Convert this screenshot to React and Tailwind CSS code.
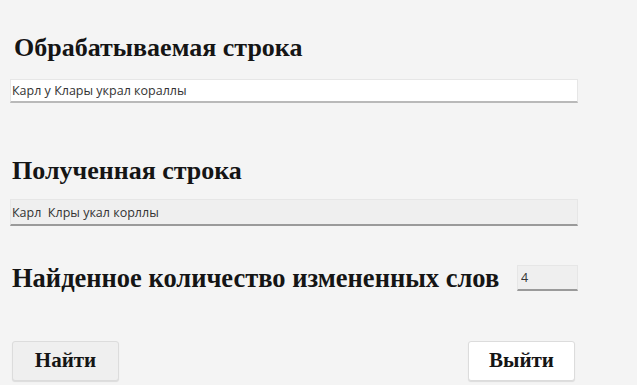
import React, { useState } from "react";

const serif = { fontFamily: '"Liberation Serif", "DejaVu Serif", serif' };

export default function App() {
  const [source, setSource] = useState("Карл у Клары украл кораллы");
  const [result] = useState("Карл  Клры укал корллы");
  const [count] = useState("4");

  return (
    <div className="w-[637px] h-[385px] bg-[#f4f4f4] overflow-hidden font-['Open_Sans',sans-serif]">
      <div className="pl-[10px] pr-[59px] pt-[34px]">
        {/* исходная строка */}
        <h2 className="ml-[4px] text-[26px] leading-[28px] font-bold text-[#151515]" style={serif}>
          Обрабатываемая строка
        </h2>
        <input
          value={source}
          onChange={(e) => setSource(e.target.value)}
          className="mt-[17px] block w-full h-[24px] px-[1px] bg-white text-[12.5px] text-[#333] border border-[#e6e6e6] border-b-2 border-b-[#b9b9b9] outline-none"
        />

        {/* результат */}
        <h2 className="mt-[54px] ml-[2px] text-[26px] leading-[28px] font-bold text-[#151515]" style={serif}>
          Полученная строка
        </h2>
        <input
          value={result}
          readOnly
          className="mt-[14px] block w-full h-[27px] px-[1px] bg-[#efefef] text-[12.5px] text-[#333] border border-[#e6e6e6] border-b-2 border-b-[#9a9a9a] outline-none"
        />

        {/* количество */}
        <div className="mt-[38px] flex items-center">
          <h2 className="ml-[2px] text-[26.5px] leading-[28px] font-bold text-[#151515]" style={serif}>
            Найденное количество измененных слов
          </h2>
          <input
            value={count}
            readOnly
            className="ml-auto block w-[61px] h-[26px] px-[3px] bg-[#efefef] text-[12.5px] text-[#333] border border-[#e6e6e6] border-b-2 border-b-[#9a9a9a] outline-none"
          />
        </div>

        {/* кнопки */}
        <div className="mt-[49px] flex justify-between pl-[2px] pr-[3px]">
          <button
            className="w-[107px] h-[40px] bg-[#efefef] border border-[#dcdcdc] rounded-[3px] shadow-[0_1px_1px_rgba(0,0,0,0.1)] text-[21px] font-bold text-[#151515]"
            style={serif}
          >
            Найти
          </button>
          <button
            className="w-[107px] h-[40px] bg-white border border-[#dcdcdc] rounded-[3px] shadow-[0_1px_1px_rgba(0,0,0,0.1)] text-[21px] font-bold text-[#151515]"
            style={serif}
          >
            Выйти
          </button>
        </div>
      </div>
    </div>
  );
}
